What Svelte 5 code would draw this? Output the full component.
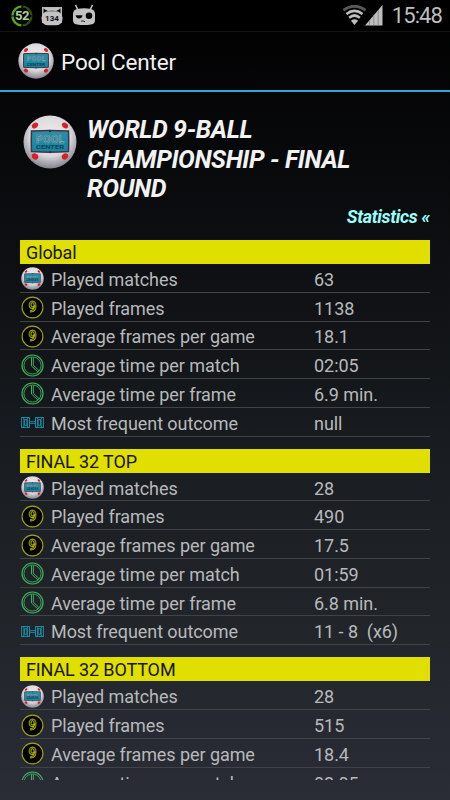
<script>
  const sections = [
    { title: 'Global', values: ['63', '1138', '18.1', '02:05', '6.9 min.', 'null'] },
    { title: 'FINAL 32 TOP', values: ['28', '490', '17.5', '01:59', '6.8 min.', '11 - 8  (x6)'] },
    { title: 'FINAL 32 BOTTOM', values: ['28', '515', '18.4', '02:05'] }
  ];
  const rows = [
    ['ball', 'Played matches'],
    ['nine', 'Played frames'],
    ['nine', 'Average frames per game'],
    ['clock', 'Average time per match'],
    ['clock', 'Average time per frame'],
    ['score', 'Most frequent outcome']
  ];
</script>

{#snippet ball(size)}
  <svg class="ball" width={size} height={size} viewBox="0 0 54 54">
    <defs>
      <radialGradient id="shell" cx="50%" cy="38%" r="62%">
        <stop offset="0" stop-color="#f2eeee" />
        <stop offset=".62" stop-color="#dcd9dc" />
        <stop offset="1" stop-color="#85838f" />
      </radialGradient>
      <linearGradient id="screen" x1="0" y1="0" x2="0" y2="1">
        <stop offset="0" stop-color="#2b8fa9" />
        <stop offset="1" stop-color="#1485a5" />
      </linearGradient>
    </defs>
    <circle cx="27" cy="27" r="26.5" fill="url(#shell)" />
    <g fill="#d71f27">
      <ellipse cx="12" cy="10.5" rx="3.4" ry="2.5" transform="rotate(-40 12 10.5)" />
      <ellipse cx="42" cy="10.5" rx="3.4" ry="2.5" transform="rotate(40 42 10.5)" />
      <ellipse cx="12" cy="41.5" rx="3.4" ry="2.8" transform="rotate(40 12 41.5)" />
      <ellipse cx="42" cy="41.5" rx="3.4" ry="2.8" transform="rotate(-40 42 41.5)" />
    </g>
    <path d="M8.500 16Q27 14.8 45.500 16Q46 26 45.500 36.500Q27 37.800 8.500 36.500Q8 26 8.500 16Z" fill="url(#screen)" stroke="#45333f" stroke-width="1.500" />
    <g fill="#263848"><circle cx="27" cy="16" r="1.200" /><circle cx="27" cy="37" r="1.200" /></g>
    <text x="27" y="27.500" text-anchor="middle" textLength="28" class="pool">POOL</text>
    <text x="27" y="34" text-anchor="middle" textLength="28" lengthAdjust="spacingAndGlyphs" class="center">CENTER</text>
  </svg>
{/snippet}

{#snippet icon(kind)}
  {#if kind === 'ball'}
    {@render ball(23)}
  {:else if kind === 'nine'}
    <svg width="23" height="23" viewBox="0 0 23 23">
      <circle cx="11.500" cy="11.500" r="10.400" fill="#030400" stroke="#a0a31a" stroke-width="1.100" />
      <text x="11.500" y="16.300" text-anchor="middle" class="digit">9</text>
    </svg>
  {:else if kind === 'clock'}
    <svg width="23" height="23" viewBox="0 0 23 23" fill="none" stroke="#3bb35e">
      <circle cx="11.500" cy="11.500" r="10.500" stroke-width="1.200" />
      <circle cx="11.500" cy="11.500" r="8.600" stroke-width=".9" />
      <path d="M10.500 3.500V12L16.800 17.800L18 16.600L12.300 11.200V3.500" stroke-width="1" />
    </svg>
  {:else}
    <svg width="23" height="23" viewBox="0 0 23 23" fill="none" stroke="#1797b3" stroke-width=".9">
      <path d="M.6 6V17M22.400 6V17M.6 6.500H8.700M.6 16.500H8.700M14.300 6.500H22.400M14.300 16.500H22.400" />
      <path d="M2 6.500L3 8V15L2 16.500M7.300 6.500L6.300 8V15L7.300 16.500M21 6.500L20 8V15L21 16.500M15.700 6.500L16.700 8V15L15.700 16.500" />
      <path d="M3.300 8.700H6V14.300H3.300ZM17 8.700H19.700V14.300H17Z" />
      <path d="M8.500 6.500V16.500M14.500 6.500V16.500M9 10.600H14M9 12.400H14" />
    </svg>
  {/if}
{/snippet}

<div class="screen">
  <header class="status">
    <svg width="22" height="24" viewBox="0 0 22 24">
      <circle cx="11" cy="12" r="9.500" fill="none" stroke="#28540f" stroke-width="2.200" />
      <path d="M11 2.500A9.500 9.500 0 0 0 11 21.500" fill="none" stroke="#58a51e" stroke-width="2.200" />
      <path d="M11 0V5M11 19V24M0 12H4M18 12H22" stroke="#000" stroke-width="1.200" />
      <text x="11" y="16.200" text-anchor="middle" class="battery">52</text>
    </svg>
    <svg class="cat" width="22" height="20" viewBox="0 0 22 20">
      <path d="M1 1H21V17H1Z" fill="#b9b9b9" />
      <path d="M2.500 2.500L7 5Q11 4 15 5L19.500 2.500V10H2.500Z" fill="#111" />
      <path d="M2.500 2.500H19.500L15 4.800Q11 3.800 7 4.800Z" fill="#c3c3c3" />
      <rect x=".5" y="5.300" width="21" height="14" rx="6.500" fill="#c3c3c3" />
      <text x="11" y="15" text-anchor="middle" class="count">134</text>
    </svg>
    <svg class="droid" width="24" height="22" viewBox="0 0 24 22">
      <path d="M3.500 1L6 6M20.500 1L18 6" stroke="#c3c3c3" stroke-width="1.600" />
      <path d="M5 5Q12 3.500 19 5Q23 6 23 10V16Q23 20 19 20.500Q12 21.500 5 20.500Q1 20 1 16V10Q1 6 5 5Z" fill="#c3c3c3" />
      <path d="M3.500 11.200H10.500Q10 14.500 7 14.500Q4.500 14.500 3.500 11.200Z" fill="#080808" />
      <circle cx="17" cy="11.800" r="3.300" fill="#080808" />
      <path d="M9 17.200Q11 16.200 13 17.800" stroke="#222" fill="none" />
    </svg>
    <span class="grow"></span>
    <svg width="25" height="21" viewBox="0 0 26 21" preserveAspectRatio="none" fill="none" stroke="#bebebe" stroke-width="2.700">
      <path d="M1.500 5.300Q13 -2.800 24.500 5.300" stroke="#575757" stroke-width="3" />
      <path d="M4.600 9Q13 2.800 21.400 9M7.400 12.700Q13 8.300 18.600 12.700" />
      <path d="M9.300 15.700Q13 13 16.700 15.700L13 20Z" fill="#bebebe" stroke="none" />
    </svg>
    <svg class="signal" width="18" height="21" viewBox="0 0 18 21">
      <path d="M0 20.500L17.500 0V20.500Z" fill="#bebebe" />
      <path d="M4.500 15V21M8.800 10V21M13.200 5V21" stroke="#777" stroke-width=".7" />
    </svg>
    <time>15:48</time>
  </header>

  <nav>{@render ball(36)}<h1>Pool Center</h1></nav>

  <main>
    <div class="intro">
      {@render ball(54)}
      <h2>WORLD 9-BALL<br />CHAMPIONSHIP - FINAL<br />ROUND</h2>
    </div>
    <div class="link">Statistics «</div>
    {#each sections as section}
      <section>
        <h3>{section.title}</h3>
        {#each section.values as value, i}
          <div class="row">
            {@render icon(rows[i][0])}
            <span class="label">{rows[i][1]}</span>
            <span class="value">{value}</span>
          </div>
        {/each}
      </section>
    {/each}
  </main>
</div>

<style>
  :global(body) { margin: 0; background: #000; }
  .screen {
    width: 450px; height: 800px; overflow: hidden;
    display: flex; flex-direction: column; box-sizing: border-box; padding-bottom: 20px;
    background: linear-gradient(#000 0, #08090b 20%, #101215 38%, #1b1f23 62%, #22262b 80%, #2a2c36 100%);
    font-family: Roboto, "Liberation Sans", sans-serif; color: #b8b9ba;
  }
  svg { display: block; flex: none; }
  .status {
    height: 32px; flex: none; display: flex; align-items: center; box-sizing: border-box;
    padding: 0 8px 0 11px; background: #000; border-bottom: 1px solid #141414;
  }
  .cat { margin: 1px 0 0 8px; }
  .droid { margin: -2px 0 0 9px; }
  .grow { flex: 1; }
  .signal { margin-left: -2px; }
  time { font-size: 22px; line-height: 30px; color: #bebebe; margin: 1px 0 0 9px; letter-spacing: -.9px; }
  .battery { font: bold 13px Roboto, sans-serif; fill: #aad39a; letter-spacing: -.5px; }
  .count { font: bold 8px Roboto, sans-serif; fill: #111; }
  nav {
    height: 60px; flex: none; box-sizing: border-box; display: flex; align-items: center;
    padding: 0 18px; gap: 7px; border-bottom: 2px solid #2aa7db;
  }
  h1 { font-weight: 400; font-size: 22.500px; line-height: 30px; margin: 1px 0 0; color: #f0f0f0; letter-spacing: -.15px; }
  main { flex: 1; min-height: 0; overflow: hidden; padding: 0 20px; }
  .intro { display: flex; gap: 10px; padding: 23px 0 0 3px; }
  h2 { margin: 0; font-size: 25px; font-weight: 700; font-style: italic; line-height: 29.500px; letter-spacing: -.4px; color: #f2f2f2; white-space: nowrap; }
  .link { height: 36.500px; text-align: right; font-size: 18px; line-height: 25px; letter-spacing: -.35px; font-weight: 700; font-style: italic; color: #9ff; }
  section { margin-bottom: 12.200px; }
  h3 {
    height: 24px; box-sizing: border-box; margin: 0; padding-left: 6px; background: #e1df00;
    color: #151505; font-size: 18px; line-height: 26px; font-weight: 400; letter-spacing: -.12px;
  }
  .row { height: 28.750px; display: flex; align-items: center; box-sizing: border-box; border-bottom: 1px solid #414447; padding: 2px 0 0 1px; }
  .label { width: 263px; margin: 2px 0 0 7px; font-size: 18px; line-height: 26px; letter-spacing: -.07px; white-space: nowrap; }
  .value { margin-top: 2px; font-size: 18px; line-height: 26px; letter-spacing: -.05px; white-space: pre; }
  .digit { font: bold 14px Roboto, sans-serif; fill: #242600; stroke: #b2b51b; stroke-width: .8px; }
  .pool { font: bold 10px Roboto, sans-serif; fill: #28758a; stroke: #86a2ab; stroke-width: .7px; }
  .center { font: bold 6px Roboto, sans-serif; fill: #103f50; }
</style>
